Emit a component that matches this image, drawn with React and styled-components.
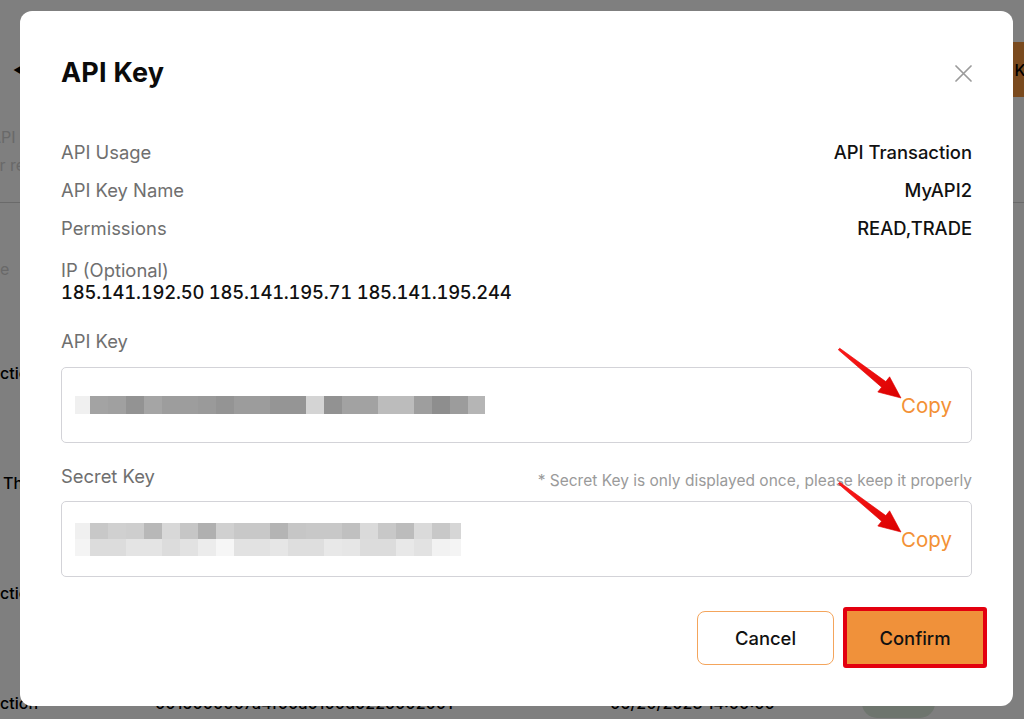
import React from "react";
import styled, { createGlobalStyle } from "styled-components";

const Global = createGlobalStyle`
  html, body { margin: 0; padding: 0; height: 719px; overflow: hidden; }
  body {
    font-family: Inter, "Noto Sans", "Liberation Sans", sans-serif;
    background: #fff;
    -webkit-font-smoothing: antialiased;
  }
  * { box-sizing: border-box; }
`;

/* ---------- background page ---------- */
const Page = styled.div`
  width: 1024px;
  height: 719px;
  overflow: hidden;
  background: #fff;
  color: #111;
`;
const PageHeader = styled.div`
  margin-top: 42px;
  height: 55px;
  display: flex;
  align-items: center;
  justify-content: space-between;
  padding-left: 13px;
`;
const Back = styled.span`
  font-size: 13px;
  color: #000;
`;
const CreateButton = styled.div`
  flex: none;
  width: 200px;
  height: 55px;
  margin-right: -74px;
  background: #f4943c;
  border-radius: 6px;
  display: flex;
  align-items: center;
  padding-left: 16px;
  font-size: 16px;
  font-weight: 500;
  color: #000;
  white-space: nowrap;
`;
const Intro = styled.div`
  margin-top: 26px;
  font-size: 16px;
  line-height: 28px;
  color: #d2d2d2;
  white-space: nowrap;
`;
const IntroLine = styled.div`
  margin-left: ${(p) => p.$shift}px;
`;
const Divider = styled.div`
  margin-top: 23px;
  height: 1px;
  background: #d4d4d4;
`;
const TableHead = styled.div`
  margin-top: 54px;
  margin-left: -28px;
  font-size: 16px;
  line-height: 24px;
  color: #d2d2d2;
`;
const TableBody = styled.div`
  margin-top: 37px;
`;
const TableRow = styled.div`
  height: 110px;
  display: grid;
  grid-template-columns: 155px 455px 252px 1fr;
  align-items: center;
  font-size: 16px;
  font-weight: 500;
  white-space: nowrap;
`;
const Cell = styled.div`
  margin-left: ${(p) => p.$shift || 0}px;
  color: #000;
`;
const StatusPill = styled.div`
  width: 73px;
  height: 30px;
  border-radius: 15px;
  background: #dcebdc;
`;

/* ---------- modal ---------- */
const Overlay = styled.div`
  position: fixed;
  inset: 0;
  background: rgba(0, 0, 0, 0.5);
  padding: 11px 0 0 20px;
`;
const Modal = styled.div`
  width: 993px;
  background: #fff;
  border-radius: 12px;
  padding: 46px 41px 38px;
`;
const ModalHeader = styled.div`
  display: flex;
  align-items: center;
  justify-content: space-between;
  height: 32px;
`;
const Title = styled.h2`
  margin: 0;
  font-size: 27px;
  line-height: 32px;
  font-weight: 700;
  color: #0b0b0b;
  letter-spacing: 0.2px;
`;
const CloseButton = styled.button`
  width: 17px;
  height: 17px;
  padding: 0;
  border: 0;
  background: none;
  display: flex;
  align-items: center;
  justify-content: center;
  cursor: pointer;
`;
const InfoList = styled.div`
  margin-top: 51px;
  display: flex;
  flex-direction: column;
  gap: 14px;
`;
const InfoRow = styled.div`
  display: flex;
  justify-content: space-between;
  font-size: 18.4px;
  line-height: 24px;
`;
const Label = styled.span`
  color: #6f6f6f;
`;
const Value = styled.span`
  color: #111;
  font-weight: 500;
`;
const IpValue = styled(Value)`
  font-variant-numeric: tabular-nums;
  font-feature-settings: "tnum" 1;
  letter-spacing: -0.2px;
`;
const IpBlock = styled.div`
  margin-top: 19px;
  font-size: 18.4px;
  line-height: 22px;
  display: flex;
  flex-direction: column;
`;
const FieldHead = styled.div`
  margin-top: ${(p) => p.$top}px;
  display: flex;
  justify-content: space-between;
  align-items: flex-end;
  font-size: 18.4px;
  line-height: 24px;
`;
const Note = styled.span`
  font-size: 15.5px;
  line-height: 14px;
  color: #9a9a9a;
`;
const FieldBox = styled.div`
  position: relative;
  margin-top: ${(p) => p.$top}px;
  height: 76px;
  border: 1px solid #d3d3d8;
  border-radius: 5px;
  display: flex;
  align-items: center;
  justify-content: space-between;
  padding: 0 19px 0 13px;
`;
const Mosaic = styled.div`
  display: flex;
  flex-direction: column;
`;
const MosaicRow = styled.div`
  display: flex;
  height: ${(p) => p.$h}px;
`;
const Tile = styled.div`
  width: ${(p) => p.$w}px;
  height: 100%;
  background: ${(p) => p.$c};
`;
const CopyLink = styled.span`
  font-size: 20.5px;
  color: #f39135;
  cursor: pointer;
`;
const ArrowMark = styled.svg`
  position: absolute;
  left: 769px;
  top: -27px;
  width: 75px;
  height: 62px;
  overflow: visible;
  pointer-events: none;
`;
const Footer = styled.div`
  margin-top: 30px;
  margin-right: -15px;
  display: flex;
  justify-content: flex-end;
  align-items: center;
  gap: 9px;
`;
const Button = styled.button`
  font-family: inherit;
  font-size: 18.4px;
  font-weight: 500;
  color: #111;
  cursor: pointer;
  display: flex;
  align-items: center;
  justify-content: center;
`;
const CancelButton = styled(Button)`
  width: 137px;
  height: 54px;
  background: #fff;
  border: 1px solid #f4a55c;
  border-radius: 8px;
`;
const ConfirmButton = styled(Button)`
  width: 144px;
  height: 61px;
  background: #f0913a;
  border: 4px solid #e3000f;
  border-radius: 3px;
`;

/* ---------- data ---------- */
const apiRow = [
  "#f0f0f0", "#a3a3a3", "#a0a0a0", "#939393", "#a5a5a5", "#9d9d9d", "#9d9d9d",
  "#9a9a9a", "#949494", "#9c9c9c", "#9c9c9c", "#959595", "#959595", "#d4d4d4",
  "#929292", "#a2a2a2", "#a2a2a2", "#bcbcbc", "#bcbcbc", "#9e9e9e", "#8e8e8e",
  "#9c9c9c", "#b5b5b5",
];
const secretRow1 = [
  "#f0f0f0", "#c8c8c8", "#d0d0d0", "#cecece", "#b8b8b8", "#d8d8d8", "#c6c6c6",
  "#b0b0b0", "#d0d0d0", "#c8c8c8", "#c8c8c8", "#b4b4b4", "#c6c6c6", "#c8c8c8",
  "#c8c8c8", "#c0c0c0", "#dadada", "#c8c8c8", "#bcbcbc", "#dadada", "#c8c8c8",
  "#d6d6d6",
];
const secretRow2 = [
  "#f4f4f4", "#dcdcdc", "#dcdcdc", "#e4e4e4", "#e4e4e4", "#dcdcdc", "#e2e2e2",
  "#ececec", "#f6f6f6", "#e2e2e2", "#e2e2e2", "#e6e6e6", "#dedede", "#dedede",
  "#e8e8e8", "#e6e6e6", "#dcdcdc", "#dcdcdc", "#e8e8e8", "#e2e2e2", "#f2f2f2",
  "#f4f4f4",
];

const tileWidth = (i, n, last) => (i === 0 ? 15 : i === n - 1 ? last : 18);

function MaskedValue({ rows }) {
  return (
    <Mosaic>
      {rows.map((r, ri) => (
        <MosaicRow key={ri} $h={r.h}>
          {r.colors.map((c, i) => (
            <Tile key={i} $c={c} $w={tileWidth(i, r.colors.length, r.last)} />
          ))}
        </MosaicRow>
      ))}
    </Mosaic>
  );
}

function Arrow() {
  return (
    <ArrowMark viewBox="0 0 75 62">
      <defs>
        <linearGradient id="ar" x1="0" y1="0" x2="1" y2="1">
          <stop offset="0" stopColor="#ff1a1a" />
          <stop offset="1" stopColor="#d90000" />
        </linearGradient>
      </defs>
      <polygon
        points="7.3,8.8 50.6,46.2 46.8,51 70,57 58.6,35.8 54.8,40.6 8.7,7.2"
        fill="url(#ar)"
        stroke="#e00000"
        strokeWidth="0.6"
        strokeLinejoin="round"
      />
    </ArrowMark>
  );
}

function CloseIcon() {
  return (
    <svg width="17" height="17" viewBox="0 0 17 17">
      <path d="M1 1 L16 16 M16 1 L1 16" stroke="#9b9b9b" strokeWidth="1.7" strokeLinecap="round" />
    </svg>
  );
}

function BackgroundPage() {
  const rows = [
    { a: "Transaction", s: -52 },
    { a: "Third Party", s: 3 },
    { a: "Transaction", s: -52 },
    { a: "Transaction", s: -52, id: "0016000007a4f00a0100d0225002001", date: "06/20/2023 14:00:00", pill: true },
  ];
  return (
    <Page>
      <PageHeader>
        <Back>◀</Back>
        <CreateButton>+ Create API Key</CreateButton>
      </PageHeader>
      <Intro>
        <IntroLine $shift={-10}>API Key Management</IntroLine>
        <IntroLine $shift={-19}>For read and trade access</IntroLine>
      </Intro>
      <Divider />
      <TableHead>Type</TableHead>
      <TableBody>
        {rows.map((r, i) => (
          <TableRow key={i}>
            <Cell $shift={r.s}>{r.a}</Cell>
            <Cell>{r.id || "0016000007a4f00a0100d0225001998"}</Cell>
            <Cell>{r.date || "06/19/2023 10:12:45"}</Cell>
            <div>{r.pill ? <StatusPill /> : null}</div>
          </TableRow>
        ))}
      </TableBody>
    </Page>
  );
}

export default function App() {
  return (
    <>
      <Global />
      <BackgroundPage />
      <Overlay>
        <Modal>
          <ModalHeader>
            <Title>API Key</Title>
            <CloseButton aria-label="Close">
              <CloseIcon />
            </CloseButton>
          </ModalHeader>

          <InfoList>
            <InfoRow>
              <Label>API Usage</Label>
              <Value>API Transaction</Value>
            </InfoRow>
            <InfoRow>
              <Label>API Key Name</Label>
              <Value>MyAPI2</Value>
            </InfoRow>
            <InfoRow>
              <Label>Permissions</Label>
              <Value>READ,TRADE</Value>
            </InfoRow>
          </InfoList>

          <IpBlock>
            <Label>IP (Optional)</Label>
            <IpValue>185.141.192.50 185.141.195.71 185.141.195.244</IpValue>
          </IpBlock>

          <FieldHead $top={26}>
            <Label>API Key</Label>
          </FieldHead>
          <FieldBox $top={14}>
            <MaskedValue rows={[{ h: 18, last: 17, colors: apiRow }]} />
            <CopyLink>Copy</CopyLink>
            <Arrow />
          </FieldBox>

          <FieldHead $top={21}>
            <Label>Secret Key</Label>
            <Note>* Secret Key is only displayed once, please keep it properly</Note>
          </FieldHead>
          <FieldBox $top={13}>
            <MaskedValue
              rows={[
                { h: 16, last: 11, colors: secretRow1 },
                { h: 17, last: 11, colors: secretRow2 },
              ]}
            />
            <CopyLink>Copy</CopyLink>
            <Arrow />
          </FieldBox>

          <Footer>
            <CancelButton>Cancel</CancelButton>
            <ConfirmButton>Confirm</ConfirmButton>
          </Footer>
        </Modal>
      </Overlay>
    </>
  );
}
